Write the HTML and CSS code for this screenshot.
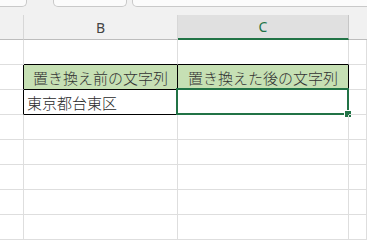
FILE: index.html
```html
<!DOCTYPE html>
<html lang="ja">
<head>
    <meta charset="UTF-8">
    <meta name="viewport" content="width=device-width, initial-scale=1.0">
    <title>置き換え</title>
    <link rel="stylesheet" href="styles.css">
</head>
<body>
    <div class="tabs">
        <div class="tab tab-first"></div>
        <div class="tab tab-mid"></div>
        <div class="tab tab-last"></div>
    </div>
    <div class="sheet">
        <div class="col-head corner"></div>
        <div class="col-head">B</div>
        <div class="col-head selected">C</div>
        <div class="col-head edge"></div>

        <div class="cell"></div>
        <div class="cell line-bottom"></div>
        <div class="cell line-bottom"></div>
        <div class="cell"></div>

        <div class="cell line-right"></div>
        <div class="cell title boxed">置き換え前の文字列</div>
        <div class="cell title boxed">置き換えた後の文字列</div>
        <div class="cell"></div>

        <div class="cell line-right"></div>
        <div class="cell value boxed">東京都台東区</div>
        <div class="cell active boxed">
            <div class="selection"></div>
            <div class="handle"></div>
        </div>
        <div class="cell"></div>

        <div class="cell"></div><div class="cell"></div><div class="cell"></div><div class="cell"></div>
        <div class="cell"></div><div class="cell"></div><div class="cell"></div><div class="cell"></div>
        <div class="cell"></div><div class="cell"></div><div class="cell"></div><div class="cell"></div>
        <div class="cell"></div><div class="cell"></div><div class="cell"></div><div class="cell"></div>
        <div class="cell"></div><div class="cell"></div><div class="cell"></div><div class="cell"></div>
    </div>
</body>
</html>
```

FILE: styles.css
```css
body, html {
    margin: 0;
    padding: 0;
    width: 100%;
    height: 100%;
    overflow: hidden;
    background-color: #ffffff;
    font-family: 'Noto Sans', 'Noto Sans CJK JP', sans-serif;
}
.tabs {
    display: flex;
    height: 15px;
    background-color: #f1f1f1;
}
.tab {
    height: 7px;
    background-color: #fbfbfb;
    border: 1px solid #c9c9c9;
    border-top: none;
    border-radius: 0 0 5px 5px;
    box-sizing: border-box;
}
.tab-first {
    width: 33px;
    margin-left: -6px;
}
.tab-mid {
    width: 74px;
    margin-left: 26px;
}
.tab-last {
    flex: 1;
    margin-left: 5px;
    margin-right: -8px;
}
.sheet {
    display: grid;
    grid-template-columns: 24px 154px 171px 1fr;
    grid-template-rows: 25px repeat(8, 25px);
}
.col-head {
    background-color: #f1f1f1;
    border-bottom: 1px solid #bdbdbd;
    border-right: 1px solid #d7d7d7;
    color: #444444;
    font-size: 14px;
    display: flex;
    align-items: center;
    justify-content: center;
}
.col-head.selected {
    background-color: #e0e0e0;
    color: #217346;
    border-bottom: 2px solid #217346;
    border-right-color: #c6c6c6;
}
.col-head.edge {
    border-right: none;
}
.cell {
    position: relative;
    border-right: 1px solid #dedede;
    border-bottom: 1px solid #dedede;
    font-family: 'Noto Sans CJK JP', sans-serif;
    font-size: 15px;
    font-weight: 300;
    color: #2a2a2a;
    display: flex;
    align-items: center;
}
.cell.line-bottom {
    border-bottom-color: #000000;
}
.cell.line-right {
    border-right-color: #000000;
}
.cell.boxed {
    border-right-color: #000000;
    border-bottom-color: #000000;
}
.cell.title {
    background-color: #c6e0b4;
    justify-content: center;
    color: #333333;
}
.cell.value {
    padding-left: 3px;
}
.selection {
    position: absolute;
    left: -2px;
    top: -2px;
    right: -1px;
    bottom: -1px;
    border: 2px solid #217346;
}
.handle {
    position: absolute;
    right: -4px;
    bottom: -4px;
    width: 6px;
    height: 6px;
    background-color: #217346;
    border: 1px solid #ffffff;
}
```
